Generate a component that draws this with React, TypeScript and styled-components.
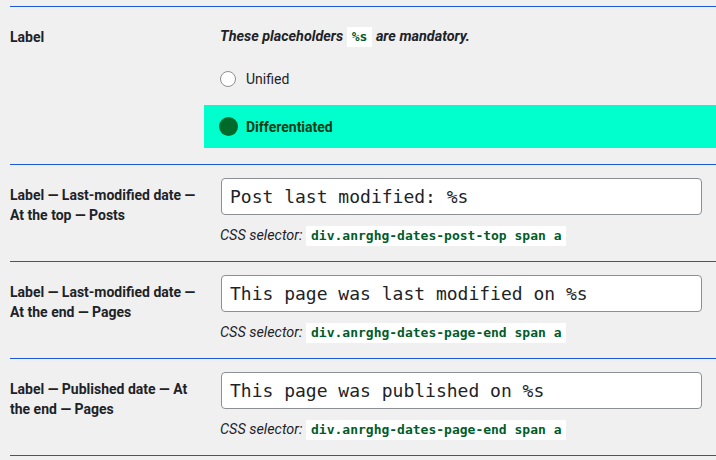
import styled, { createGlobalStyle } from "styled-components";

type Field = {
  label: string;
  value: string;
  selector: string;
};

const fields: Field[] = [
  {
    label: "Label — Last-modified date — At the top — Posts",
    value: "Post last modified: %s",
    selector: "div.anrghg-dates-post-top span a",
  },
  {
    label: "Label — Last-modified date — At the end — Pages",
    value: "This page was last modified on %s",
    selector: "div.anrghg-dates-page-end span a",
  },
  {
    label: "Label — Published date — At the end — Pages",
    value: "This page was published on %s",
    selector: "div.anrghg-dates-page-end span a",
  },
];

const modes = ["Unified", "Differentiated"];

const App = () => {
  const selected = "Differentiated";

  return (
    <>
      <GlobalStyle />
      <Table>
        <Row>
          <Heading>Label</Heading>
          <Cell $top={20} $bottom={16}>
            <Notice>
              These placeholders <Code>%s</Code> are mandatory.
            </Notice>
            <Options>
              {modes.map((mode) => (
                <Option key={mode} $active={mode === selected}>
                  <RadioMark $checked={mode === selected} />
                  {mode}
                </Option>
              ))}
            </Options>
          </Cell>
        </Row>

        {fields.map((field, i) => (
          <Row key={i} $last={i === fields.length - 1}>
            <Heading>{field.label}</Heading>
            <Cell $top={13} $bottom={15}>
              <TextInput type="text" defaultValue={field.value} />
              <Selector>
                CSS selector: <Code>{field.selector}</Code>
              </Selector>
            </Cell>
          </Row>
        ))}
      </Table>
    </>
  );
};

const GlobalStyle = createGlobalStyle`
  html, body {
    margin: 0;
    background: #f0f0f1;
    overflow: hidden;
  }

  body {
    font-family: Roboto, "Liberation Sans", sans-serif;
    font-size: 14px;
    color: #1d2327;
  }
`;

const Table = styled.div`
  margin: 6px 0 0 10px;
`;

const Row = styled.div<{ $last?: boolean }>`
  display: grid;
  grid-template-columns: 194px 1fr;
  border-top: 1px solid #1c58d6;
  border-bottom: ${(p) => (p.$last ? "1px solid #1c58d6" : "none")};
`;

const Heading = styled.div`
  padding-top: 20px;
  font-size: 14px;
  font-weight: 700;
  line-height: 20px;
  color: #1d2327;
`;

const Cell = styled.div<{ $top: number; $bottom: number }>`
  padding: ${(p) => p.$top}px 14px ${(p) => p.$bottom}px 16px;
  min-width: 0;
`;

const Notice = styled.p`
  margin: 0 0 10px;
  font-size: 14.4px;
  font-style: italic;
  font-weight: 700;
  line-height: 20px;
`;

const Code = styled.code`
  display: inline-block;
  vertical-align: top;
  padding: 3px 5px;
  line-height: 14px;
  background: #ffffff;
  font-family: "DejaVu Sans Mono", monospace;
  font-size: 13px;
  font-style: normal;
  font-weight: 700;
  color: #005c29;
`;

const Options = styled.div`
  display: flex;
  flex-direction: column;
  gap: 5px;
`;

const Option = styled.label<{ $active: boolean }>`
  display: flex;
  align-items: center;
  gap: 10px;
  height: 43px;
  margin: 0 -14px 0 -16px;
  padding: 0 16px;
  background: ${(p) => (p.$active ? "#00ffcc" : "transparent")};
  font-weight: ${(p) => (p.$active ? 700 : 400)};
  color: ${(p) => (p.$active ? "#063d17" : "#1d2327")};
`;

const RadioMark = styled.span<{ $checked: boolean }>`
  flex: none;
  box-sizing: border-box;
  width: ${(p) => (p.$checked ? "19px" : "16px")};
  height: ${(p) => (p.$checked ? "19px" : "16px")};
  margin: ${(p) => (p.$checked ? "0 -1.5px" : "0")};
  border-radius: 50%;
  border: ${(p) => (p.$checked ? "none" : "1px solid #8c8f94")};
  background: ${(p) => (p.$checked ? "#006a2a" : "#ffffff")};
`;

const TextInput = styled.input`
  display: block;
  box-sizing: border-box;
  width: calc(100% - 1px);
  height: 37px;
  margin: 0 0 0 1px;
  padding: 0 8px;
  border: 1px solid #8c8f94;
  border-radius: 4px;
  background: #ffffff;
  font-family: "DejaVu Sans Mono", monospace;
  font-size: 18px;
  color: #1d2327;
  outline: none;
`;

const Selector = styled.div`
  margin-top: 11px;
  font-size: 14.4px;
  font-style: italic;
  line-height: 20px;
  color: #1d2327;
`;

export default App;
